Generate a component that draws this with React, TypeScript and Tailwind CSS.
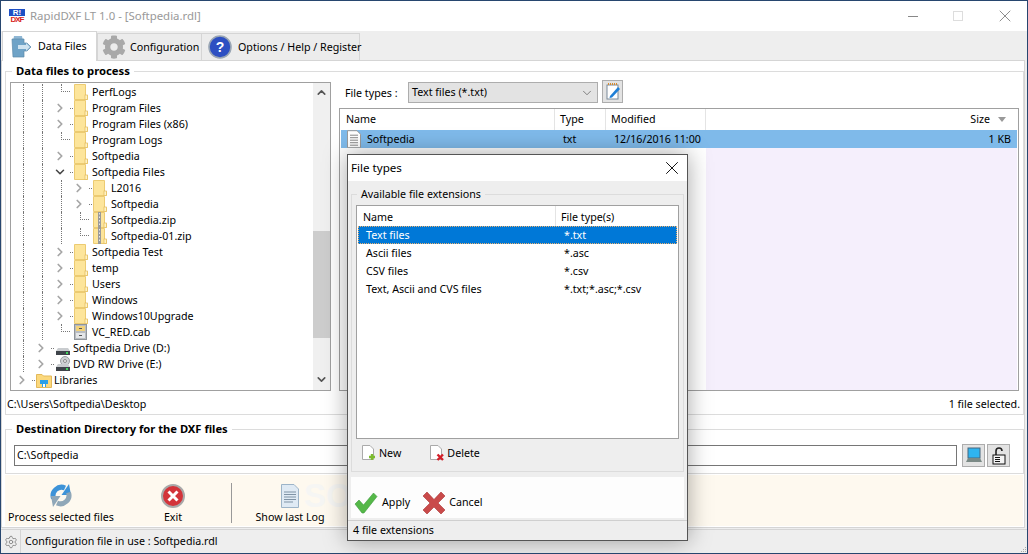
import { ChevronDown, ChevronRight, ChevronUp, Settings, X } from "lucide-react";
import { FaCog } from "react-icons/fa";

type TreeRow = {
  label: string;
  guides: number;
  kind: "open" | "closed" | "leaf";
  icon: "folder" | "zip" | "cab" | "drive" | "dvd" | "lib";
};

const treeRows: TreeRow[] = [
  { label: "PerfLogs", guides: 2, kind: "leaf", icon: "folder" },
  { label: "Program Files", guides: 2, kind: "closed", icon: "folder" },
  { label: "Program Files (x86)", guides: 2, kind: "closed", icon: "folder" },
  { label: "Program Logs", guides: 2, kind: "leaf", icon: "folder" },
  { label: "Softpedia", guides: 2, kind: "closed", icon: "folder" },
  { label: "Softpedia Files", guides: 2, kind: "open", icon: "folder" },
  { label: "L2016", guides: 3, kind: "closed", icon: "folder" },
  { label: "Softpedia", guides: 3, kind: "closed", icon: "folder" },
  { label: "Softpedia.zip", guides: 3, kind: "leaf", icon: "zip" },
  { label: "Softpedia-01.zip", guides: 3, kind: "leaf", icon: "zip" },
  { label: "Softpedia Test", guides: 2, kind: "closed", icon: "folder" },
  { label: "temp", guides: 2, kind: "closed", icon: "folder" },
  { label: "Users", guides: 2, kind: "closed", icon: "folder" },
  { label: "Windows", guides: 2, kind: "closed", icon: "folder" },
  { label: "Windows10Upgrade", guides: 2, kind: "closed", icon: "folder" },
  { label: "VC_RED.cab", guides: 2, kind: "leaf", icon: "cab" },
  { label: "Softpedia Drive (D:)", guides: 1, kind: "closed", icon: "drive" },
  { label: "DVD RW Drive (E:)", guides: 1, kind: "closed", icon: "dvd" },
  { label: "Libraries", guides: 0, kind: "closed", icon: "lib" },
];

const extensions = [
  { name: "Ascii files", types: "*.asc" },
  { name: "CSV files", types: "*.csv" },
  { name: "Text, Ascii and CVS files", types: "*.txt;*.asc;*.csv" },
];

const FolderIcon = ({ zip }: { zip?: boolean }) => (
  <svg width="14" height="16" viewBox="0 0 14 16" className="block">
    <path d="M0.5 0.5H11.5V11.5H13.5V15.5H0.5Z" fill="#fde59b" stroke="#eccb72" />
    <rect x="11" y="11" width="2.5" height="4.5" fill="#fff3c4" stroke="#e3b95a" strokeWidth="0.7" />
    {zip && <rect x="5" y="0" width="3" height="16" fill="#9a9a9a" />}
    {zip && <path d="M6.5 1V15" stroke="#e8e8e8" strokeDasharray="1.5 2" />}
  </svg>
);

const TreeIcon = ({ icon }: { icon: TreeRow["icon"] }) => {
  if (icon === "folder") return <FolderIcon />;
  if (icon === "zip") return <FolderIcon zip />;
  if (icon === "cab")
    return (
      <svg width="13" height="16" viewBox="0 0 13 16" className="block">
        <rect x="0.5" y="0.5" width="12" height="15" fill="#b9bdc2" stroke="#8f9499" />
        <rect x="2" y="2" width="9" height="5" fill="#f2d27a" />
        <rect x="2" y="9" width="9" height="5" fill="#e4e6e8" />
        <rect x="5" y="11" width="3" height="1" fill="#555" />
        <rect x="5" y="4" width="3" height="1" fill="#555" />
      </svg>
    );
  if (icon === "lib")
    return (
      <svg width="16" height="16" viewBox="0 0 16 16" className="block">
        <path d="M0.5 2.5H6L7.5 4H15.5V15.5H0.5Z" fill="#fbd87c" stroke="#e3b95a" />
        <rect x="4" y="8" width="8" height="4" fill="#2a9fe8" />
        <rect x="6" y="12" width="4" height="3" fill="#2a9fe8" />
        <rect x="7" y="12" width="2" height="3" fill="#fff" />
      </svg>
    );
  return (
    <svg width="16" height="16" viewBox="0 0 16 16" className="block">
      {icon === "dvd" && (
        <g>
          <circle cx="10" cy="5" r="4.5" fill="#cfd2d4" stroke="#9a9ea2" />
          <circle cx="10" cy="5" r="1.5" fill="#f5f5f5" stroke="#8a8a8a" />
        </g>
      )}
      <path d="M1 11L3 8H13L15 11Z" fill="#c9cccf" />
      <rect x="1" y="11" width="14" height="4" fill="#3f444a" />
      <rect x="11" y="12" width="2" height="2" fill="#3fd45a" />
    </svg>
  );
};

const TreeLine = ({ row }: { row: TreeRow }) => (
  <div className="flex h-4 items-stretch">
    {Array.from({ length: row.guides }).map((_, i) => (
      <div key={i} className="w-[19px] pl-[10px]">
        <div className="h-full border-l border-dotted border-[#777]" />
      </div>
    ))}
    <div className="flex w-[19px] items-center">
      {row.kind === "leaf" ? (
        <div className="ml-[10px] mb-2 h-2 w-[12px] border-b border-l border-dotted border-[#777]" />
      ) : row.kind === "open" ? (
        <ChevronDown size={14} strokeWidth={2.6} className="ml-[2px] shrink-0 text-[#444]" />
      ) : (
        <ChevronRight size={14} strokeWidth={3} className="ml-[2px] shrink-0 text-[#a6a6a6]" />
      )}
      {row.kind !== "leaf" && <div className="ml-[3px] w-[3px] shrink-0 border-t border-dotted border-[#777]" />}
    </div>
    <div className="flex w-[22px] items-center pl-[4px]">
      <TreeIcon icon={row.icon} />
    </div>
    <span className="leading-4">{row.label}</span>
  </div>
);

const DocIcon = ({ size = 16 }: { size?: number }) => (
  <svg width={size} height={size * 1.15} viewBox="0 0 16 18" className="block">
    <path d="M1.5 0.5H11L14.5 4V17.5H1.5Z" fill="#fff" stroke="#9a9a9a" />
    <path d="M4 5H12M4 7.5H12M4 10H12M4 12.5H12M4 15H12" stroke="#8a8a8a" />
  </svg>
);

const App = () => {
  return (
    <div className="relative flex h-[554px] w-[1028px] flex-col overflow-hidden whitespace-nowrap border border-[#27466f] bg-[#eeeeee] font-['Noto_Sans',sans-serif] text-[10.7px] text-black">
      {/* title bar */}
      <div className="flex h-[30px] items-center bg-white pl-2">
        <div className="w-[16px] text-center font-['Liberation_Sans',sans-serif] text-[8px] font-bold leading-[7px]">
          <div className="bg-[#1e4fc4] text-white">R!</div>
          <div className="tracking-[-1px] text-[#d8241c]">DXF</div>
        </div>
        <span className="ml-[5px] text-[11.4px] text-[#999]">RapidDXF LT 1.0 - [Softpedia.rdl]</span>
        <div className="ml-auto flex items-center gap-[35px] pr-[12px]">
          <div className="h-px w-[10px] bg-[#888]" />
          <div className="h-[10px] w-[10px] border border-[#ddd]" />
          <X size={20} strokeWidth={1} className="-ml-[3px] text-[#777]" />
        </div>
      </div>

      {/* tabs */}
      <div className="flex h-[29px] items-end pl-px">
        <div className="z-10 -mb-px flex h-[30px] w-[95px] items-center gap-[6px] border border-b-0 border-[#d5d5d5] bg-white pl-[8px]">
          <svg width="21" height="23" viewBox="0 0 21 23" className="shrink-0">
            <path d="M3 1H11L12 6H2Z" fill="#8fb7d4" />
            <path d="M1 4H13V8H16L20 12L16 16H13V22H2Z" fill="#6fa3c7" stroke="#5b8aab" strokeWidth="0.7" />
            <path d="M7 10H15V8L19 12L15 16V14H7Z" fill="#cfe3f0" />
          </svg>
          <span>Data Files</span>
        </div>
        <div className="flex h-[27px] w-[105px] items-center gap-[4px] border border-b-0 border-[#d5d5d5] bg-[#ececec] pl-[4px]">
          <FaCog size={24} className="shrink-0 text-[#a9a9a9]" />
          <span>Configuration</span>
        </div>
        <div className="flex h-[27px] w-[158px] items-center gap-[6px] border border-b-0 border-l-0 border-[#d5d5d5] bg-[#ececec] pl-[6px]">
          <svg width="24" height="24" viewBox="0 0 24 24" className="shrink-0">
            <circle cx="12" cy="12" r="11" fill="#2d4fc2" stroke="#9aa6b4" strokeWidth="1.6" />
            <text x="12" y="17" textAnchor="middle" fontSize="14" fontWeight="700" fill="#fff" fontFamily="Liberation Sans">?</text>
          </svg>
          <span>Options / Help / Register</span>
        </div>
      </div>

      {/* main panel */}
      <div className="mr-[2px] flex h-[468px] flex-col border border-[#d5d5d5] bg-white pl-[3px] pt-[2px]">
        <fieldset className="h-[352px] border border-[#dcdcdc] px-1">
          <legend className="ml-[2px] h-4 px-1 text-[11.3px] font-bold leading-4">Data files to process</legend>
          <div className="mt-[3px] flex h-[309px] gap-2">
            {/* folder tree */}
            <div className="flex w-[321px] border border-[#a0a0a0]">
              <div className="flex-1 overflow-hidden pl-[2px] pt-px">
                {treeRows.map((row, i) => (
                  <TreeLine key={i} row={row} />
                ))}
              </div>
              <div className="flex w-[17px] flex-col bg-[#f0f0f0]">
                <ChevronUp size={13} strokeWidth={3} className="mx-auto mt-[3px] text-[#555]" />
                <div className="mt-[132px] h-[107px] bg-[#cdcdcd]" />
                <ChevronDown size={13} strokeWidth={3} className="mx-auto mt-[35px] text-[#555]" />
              </div>
            </div>
            {/* file list */}
            <div className="flex flex-1 flex-col">
              <div className="flex h-[26px] items-start">
                <span className="mt-[2px] w-[69px] pl-[6px] leading-[18px]">File types :</span>
                <div className="flex h-[21px] w-[190px] items-center justify-between border border-[#adadad] bg-[#e3e3e3] pl-[3px] pr-[3px]">
                  <span>Text files (*.txt)</span>
                  <ChevronDown size={14} strokeWidth={1.2} className="text-[#555]" />
                </div>
                <div className="-mt-[2px] ml-[4px] flex h-[23px] w-[21px] items-center justify-center border border-[#adadad] bg-[#e3e3e3]">
                  <svg width="14" height="17" viewBox="0 0 14 17">
                    <rect x="1" y="2" width="11" height="14" fill="#fff" stroke="#7a8a99" />
                    <path d="M2 1H11" stroke="#d98a2b" strokeWidth="2" strokeDasharray="1 1" />
                    <path d="M4 13L12 4L14 6L6 14.5L3.5 15Z" fill="#1f7fd6" />
                  </svg>
                </div>
              </div>
              <div className="flex h-[283px] flex-col border border-[#a0a0a0] px-px">
                <div className="flex h-[21px] items-center">
                  <div className="h-full w-[214px] border-r border-[#e4e4e4] pl-[5px] leading-[21px]">Name</div>
                  <div className="h-full w-[51px] border-r border-[#e4e4e4] pl-[5px] leading-[21px]">Type</div>
                  <div className="h-full w-[100px] border-r border-[#e4e4e4] pl-[5px] leading-[21px]">Modified</div>
                  <div className="flex flex-1 items-center justify-end gap-[8px] pr-[11px]">
                    <span>Size</span>
                    <div className="h-0 w-0 border-x-[4px] border-t-[5px] border-x-transparent border-t-[#999]" />
                  </div>
                </div>
                <div className="flex h-[18px] items-center bg-[#7fbaea]">
                  <div className="flex w-[214px] items-center gap-[5px] pl-[5px]">
                    <DocIcon />
                    <span>Softpedia</span>
                  </div>
                  <div className="w-[51px] pl-[8px]">txt</div>
                  <div className="w-[100px] pl-[8px]">12/16/2016 11:00</div>
                  <div className="flex-1 pr-[6px] text-right">1 KB</div>
                </div>
                <div className="flex flex-1">
                  <div className="w-[365px]" />
                  <div className="flex-1 bg-[#f5effc]" />
                </div>
              </div>
            </div>
          </div>
          <div className="flex h-[26px] items-center justify-between pl-px">
            <span className="-ml-[4px]">C:\Users\Softpedia\Desktop</span>
            <span className="-mr-[1px]">1 file selected.</span>
          </div>
        </fieldset>

        <fieldset className="mt-[6px] h-[53px] border border-[#dcdcdc] pl-2">
          <legend className="-ml-[2px] h-4 px-1 text-[11.2px] font-bold leading-4">Destination Directory for the DXF files</legend>
          <div className="mt-[7px] flex items-center">
            <div className="flex h-[21px] w-[943px] items-center border border-[#767676] pl-[2px]">C:\Softpedia</div>
            <div className="ml-[5px] flex h-[23px] w-[23px] items-center justify-center border border-[#adadad] bg-[#e3e3e3]">
              <svg width="18" height="17" viewBox="0 0 18 17">
                <rect x="3" y="1" width="12" height="10" fill="#2fb4ef" stroke="#47677f" />
                <path d="M1 15L3 11H15L17 15Z" fill="#7b8a86" />
              </svg>
            </div>
            <div className="ml-[2px] flex h-[23px] w-[23px] items-center justify-center border border-[#adadad] bg-[#e3e3e3]">
              <svg width="14" height="18" viewBox="0 0 14 18">
                <path d="M4 8V4a3 3 0 0 1 6 0" fill="none" stroke="#222" strokeWidth="1.6" />
                <rect x="1" y="8" width="12" height="9" fill="#f4f4f4" stroke="#111" />
                <path d="M3 10.5H8M3 12.5H8M3 14.5H8" stroke="#111" />
              </svg>
            </div>
          </div>
        </fieldset>

        {/* toolbar */}
        <div className="mt-px flex h-[51px] w-[1018px] bg-[#fef9ef]">
          <div className="flex w-[112px] flex-col items-center pt-[8px]">
            <svg width="24" height="25" viewBox="0 0 24 24" className="shrink-0">
              <path d="M4.5 15A8.5 8.5 0 0 1 16 4.5" fill="none" stroke="#3d93d8" strokeWidth="5" />
              <path d="M12.5 11.5H22L20 0.5Z" fill="#3d93d8" />
              <path d="M19.5 9A8.5 8.5 0 0 1 8 19.5" fill="none" stroke="#8fa7b8" strokeWidth="5" />
              <path d="M11.5 12.5H2L4 23.5Z" fill="#8fa7b8" />
            </svg>
            <span className="mt-[1px] leading-4">Process selected files</span>
          </div>
          <div className="flex w-[112px] flex-col items-center pt-[9px]">
            <svg width="24" height="24" viewBox="0 0 24 24" className="shrink-0">
              <circle cx="12" cy="12" r="11" fill="#d3343a" stroke="#a9a9a9" strokeWidth="2" />
              <path d="M7.5 7.5L16.5 16.5M16.5 7.5L7.5 16.5" stroke="#fff" strokeWidth="3" />
            </svg>
            <span className="mt-[1px] leading-4">Exit</span>
          </div>
          <div className="mt-[8px] ml-[2px] h-[40px] w-px bg-[#999]" />
          <div className="flex w-[116px] flex-col items-center pt-[9px]">
            <svg width="18" height="24" viewBox="0 0 18 24" className="shrink-0">
              <path d="M0.5 0.5H13L17.5 5V23.5H0.5Z" fill="#dfeaf4" stroke="#9db4c8" />
              <path d="M3 8H15M3 10.5H15M3 13H15M3 15.5H15M3 18H12" stroke="#7f93a5" />
            </svg>
            <span className="mt-[1px] leading-4">Show last Log</span>
          </div>
        </div>
      </div>

      {/* status bar */}
      <div className="mt-px flex flex-1 items-center border-t border-[#d5d5d5]">
        <div className="flex h-full w-[20px] items-center justify-center border-r border-[#d5d5d5]">
          <Settings size={14} strokeWidth={1.6} className="text-[#888]" />
        </div>
        <span className="ml-1">Configuration file in use : Softpedia.rdl</span>
        <div className="ml-auto mr-px mt-auto grid grid-cols-3 gap-px pb-px">
          <i className="h-px w-px" />
          <i className="h-px w-px" />
          <i className="h-px w-px bg-[#aaa]" />
          <i className="h-px w-px" />
          <i className="h-px w-px bg-[#aaa]" />
          <i className="h-px w-px bg-[#aaa]" />
          <i className="h-px w-px bg-[#aaa]" />
          <i className="h-px w-px bg-[#aaa]" />
          <i className="h-px w-px bg-[#aaa]" />
        </div>
      </div>

      {/* watermark */}
      <span className="absolute left-[303px] top-[478px] font-['Liberation_Sans',sans-serif] text-[33px] font-bold leading-none text-[#f6f6f4]">SOFTPEDIA</span>

      {/* file types dialog */}
      <div className="absolute left-[346px] top-[153px] flex h-[387px] w-[341px] flex-col border border-[#555] bg-[#eeeeee] shadow-[0_0_22px_rgba(0,0,0,0.35)]">
        <div className="flex h-[26px] items-center justify-between bg-white pl-[3px] pr-[4px] text-[11.6px]">
          <span>File types</span>
          <X size={22} strokeWidth={1} />
        </div>
        <fieldset className="mx-[3px] mt-[5px] h-[286px] border border-[#dcdcdc] px-[4px]">
          <legend className="ml-[1px] h-4 px-1 leading-4">Available file extensions</legend>
          <div className="mt-[3px] flex h-[234px] flex-col border border-[#a0a0a0] bg-white px-px">
            <div className="flex h-[20px]">
              <div className="w-[198px] border-r border-[#e4e4e4] pl-[5px] leading-[22px]">Name</div>
              <div className="pl-[5px] leading-[22px]">File type(s)</div>
            </div>
            <div className="flex h-[18px] items-center border border-dotted border-[#e8b070] bg-[#0078d7] text-white">
              <div className="w-[197px] pl-[7px]">Text files</div>
              <div className="pl-[8px]">*.txt</div>
            </div>
            {extensions.map((ext) => (
              <div key={ext.name} className="flex h-[18px] items-center">
                <div className="w-[198px] pl-[8px]">{ext.name}</div>
                <div className="pl-[8px]">{ext.types}</div>
              </div>
            ))}
          </div>
          <div className="mt-[4px] flex h-[20px] items-center pl-[5px]">
            <svg width="16" height="16" viewBox="0 0 16 16">
              <path d="M1.5 0.5H9L12.5 4V14.5H1.5Z" fill="#fff" stroke="#aaa" />
              <path d="M11 9V15M8 12H14" stroke="#7cbb2e" strokeWidth="2.4" />
            </svg>
            <span className="ml-[2px]">New</span>
            <svg width="16" height="16" viewBox="0 0 16 16" className="ml-[28px]">
              <path d="M1.5 0.5H9L12.5 4V14.5H1.5Z" fill="#fff" stroke="#aaa" />
              <path d="M8.5 9.5L14 15M14 9.5L8.5 15" stroke="#d3202a" strokeWidth="2.4" />
            </svg>
            <span className="ml-[2px]">Delete</span>
          </div>
        </fieldset>
        <div className="mx-[3px] mt-[5px] flex h-[41px] items-center bg-white/90 pl-[3px] pt-[10px]">
          <svg width="24" height="24" viewBox="0 0 24 24">
            <path d="M1 13L5 9L9.5 14L19.5 2L23 5.5L10 22H8Z" fill="#55b848" stroke="#3d9a3d" strokeWidth="0.6" />
          </svg>
          <span className="ml-[4px]">Apply</span>
          <svg width="24" height="24" viewBox="0 0 24 24" className="ml-[12px]">
            <path d="M5 1L12 8.5L19 1L23 5L16 12L23 19L19 23L12 16L5 23L1 19L8 12L1 5Z" fill="#c94a4a" stroke="#a33" strokeWidth="0.6" />
          </svg>
          <span className="ml-[3px]">Cancel</span>
        </div>
        <div className="mt-[2px] flex flex-1 items-center border-t border-[#cfcfcf] pl-[5px]">4 file extensions</div>
      </div>
    </div>
  );
};

export default App;
